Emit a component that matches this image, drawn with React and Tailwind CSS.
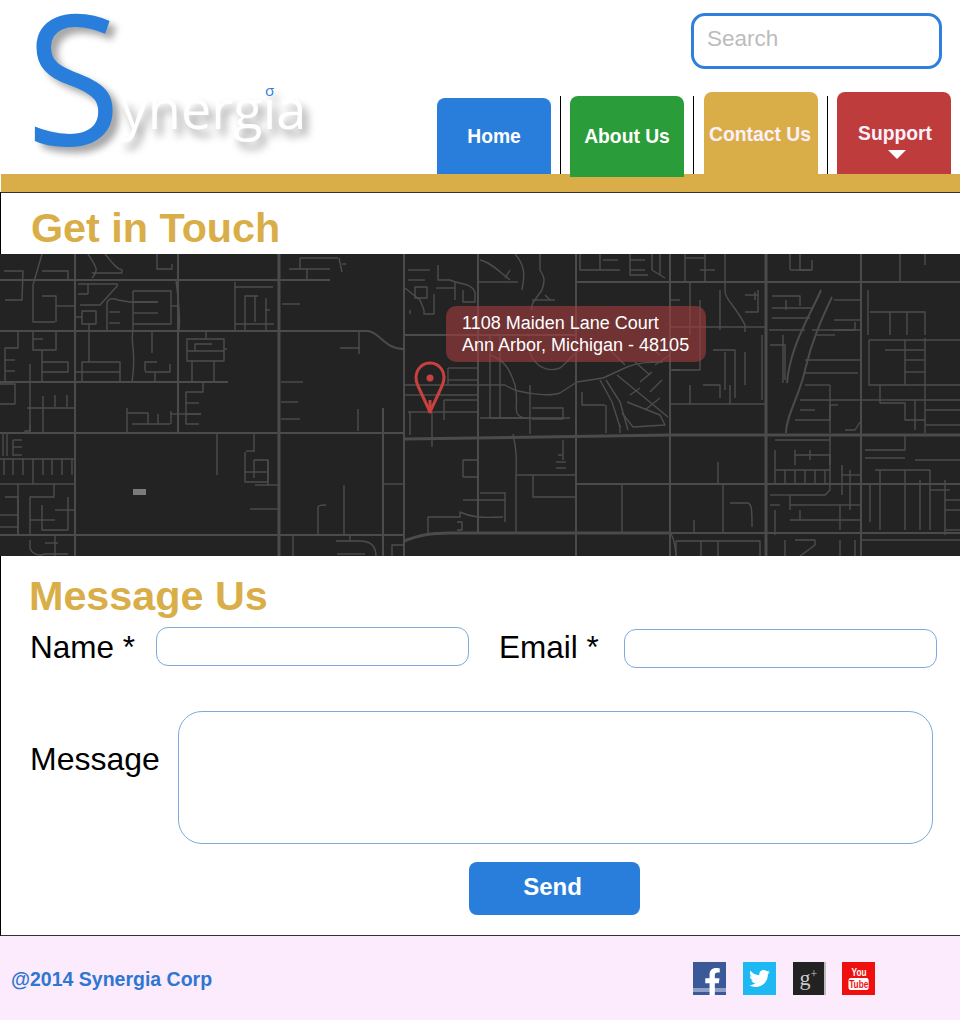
import { FaFacebookF, FaTwitter } from "react-icons/fa";

const FONT = "font-['Liberation_Sans',Arial,sans-serif]";

// map drawn in page coordinates, viewBox starts at the top of the map
const MAJOR_ROADS = [
  "M404 439L670 435H960",
  "M404 541C420 535 430 533 450 533H670",
  "M766 254V556",
  "M279 254V556",
];

const MID_ROADS = [
  "M0 280H330", "M0 331H368C378 331 385 349 403 349", "M0 382H228", "M0 433H405", "M0 535H405",
  "M75 254V556", "M178 254V433", "M404 254V556", "M383 408V556",
  "M575 282H960", "M404 335H575", "M575 484H960", "M670 533H960",
  "M576 254V556", "M670 254V556", "M861 254V556", "M478 254V534",
  "M821 290C812 312 790 345 787 383",
  "M832 297C822 318 812 340 805 370C800 395 786 415 786 433",
];

const STREETS = [
  // top left
  "M4 271H23L22 300H5", "M42 254L33 285V322H55", "M42 271H68V280", "M42 296H56V322", "M56 306H75",
  "M5 382V348H18V331", "M5 360H15", "M5 371H15", "M33 331V350H56V331", "M33 339H43", "M42 350V382",
  "M42 362H68V372H42", "M88 254C95 265 100 270 92 278", "M105 254C112 262 115 268 122 270V273H92",
  "M157 254V269H172V264", "M300 258H338", "M300 258V269", "M289 269H330", "M307 269V280", "M339 258L342 272", "M342 264H346",
  "M78 284H118", "M78 294H88M88 284V294", "M80 305H100L118 285", "M107 330V303C108 298 113 298 118 300L130 302H158",
  "M109 312H120", "M109 323H120", "M82 311H96V324H82Z", "M89 324V362", "M76 317H82",
  "M133 291H171V324H133", "M133 291V331", "M133 302H158", "M133 313H158", "M171 306H178", "M176 280C178 300 181 315 179 331",
  "M133 331C130 345 137 350 132 382", "M152 331V353", "M82 382V362H120V382", "M75 372H120", "M145 371V362H157", "M145 372H170V364", "M155 372V382",
  "M235 282V287H273", "M235 330V287", "M245 330V296H258", "M255 296V322", "M266 298V330", "M235 324H274", "M270 310H265",
  "M187 339H224V361H187Z", "M187 351H224", "M195 351V344H212", "M206 331V339", "M192 361V382", "M214 361V382", "M224 349H227",
  "M203 382V392H186V424H199", "M186 403H199", "M186 414H201", "M170 414H201", "M127 408V433", "M127 413H148V424", "M132 424H170", "M158 424V414", "M171 411V424",
  "M281 382H303", "M281 402H298", "M281 419H300", "M282 304H300", "M340 348H360M359 332V354", "M358 409V431",
  "M0 384H15V404H0", "M30 364V433", "M43 396V433", "M27 408H75", "M30 425V431H25V433", "M55 395V407", "M67 395V407",
  // lower left
  "M3 434V456", "M7 434V456", "M13 440V456", "M13 440H22", "M13 447H22", "M13 455H22",
  "M0 459H75", "M4 459V475", "M13 459V475", "M23 459V475", "M33 459V484", "M43 459V475", "M52 459V475", "M62 459V475", "M72 459V475",
  "M0 484H75", "M18 484V535", "M5 497H18V535", "M0 515H18", "M0 527H18", "M30 535V497H54V484", "M30 520H55", "M42 505V530H68V497", "M55 510H75",
  "M217 433V475", "M254 433V452", "M246 451H254", "M245 452V482H268V460H254", "M254 460V478", "M245 472H268", "M268 460V485", "M255 485H279", "M250 509H279",
  "M318 535V507C318 505 322 505 326 505", "M344 485V535", "M383 484H404", "M293 535V556", "M336 541H360C373 541 376 548 376 556", "M350 535V541", "M337 554H365", "M392 556V545H404",
  "M30 540V548C32 555 40 556 45 554H68", "M45 543H58", "M55 535V556",
  // top middle
  "M408 270H430", "M408 280H425", "M415 287H427V298H415Z", "M405 288L420 300L424 310V314H434V294", "M410 310V314",
  "M438 265V280H450C460 285 470 282 475 292V302H463V290", "M436 288H455", "M455 282V300",
  "M480 260C490 262 500 272 510 280", "M510 270L505 278", "M478 282H518", "M540 254V270C545 278 545 280 542 290C535 300 530 305 532 310",
  "M515 254C525 265 525 275 522 290", "M532 300H555", "M550 300L545 295",
  "M580 254V270H620", "M600 254V270", "M603 260H618", "M630 254V275H648", "M630 260H645", "M630 270H645",
  "M652 254V270L665 278", "M660 254V275", "M685 254V282", "M705 254V282", "M685 258H705", "M700 270H715",
  "M690 282V335", "M670 300H680", "M700 300V335", "M725 254V290C725 300 735 305 745 325V332", "M745 295H758", "M755 292V300", "M758 290V312H745", "M720 330V290",
  "M670 327H766", "M670 370H680", "M700 335V370H672", "M713 350H735V398", "M725 352V390", "M745 352V385", "M762 335V400", "M703 385H720V398",
  "M670 404H766", "M690 385V404", "M730 385V404",
  // the curved neighbourhood
  "M404 385H505C510 388 513 390 518 391C535 395 552 396 560 393L577 382L603 378L627 367C640 362 650 362 663 362",
  "M600 380L612 402L620 427", "M606 380L620 402L628 430", "M627 402L660 415L665 425L633 427L622 413",
  "M617 375L668 417", "M635 362L650 375", "M655 365L670 355", "M630 395L640 388", "M645 410L660 398", "M640 382L652 372", "M650 392L662 380",
  "M582 392V405H605", "M606 405V433", "M620 425V433",
  "M490 355C505 360 510 370 515 385C520 405 510 415 525 418", "M490 335V418H570", "M500 335V418", "M530 385V434", "M532 408H563V419H532", "M480 418H530",
  "M404 395H478", "M444 400V420", "M444 400H478", "M408 412H478", "M410 412V435", "M432 412V447", "M448 368H478", "M448 380H478", "M448 368V385",
  "M530 340C525 355 540 375 560 368C570 360 575 350 590 345", "M610 350L625 365", "M640 340L660 355",
  // right blocks
  "M772 296H800V306", "M772 308H812", "M772 318H810", "M786 300V310", "M769 330H805", "M812 330H860", "M770 345H785V380", "M783 335V383",
  "M834 300H860", "M834 320H860", "M833 330H855V322", "M815 335H835", "M805 360H860", "M805 373H858", "M800 400H860", "M805 385H830",
  "M830 385V433", "M795 420H830", "M800 410H815", "M830 405V420", "M830 405H838", "M845 430H855L860 422",
  "M790 254V270", "M800 254V270H812V260", "M790 270H810", "M900 254V282", "M925 254V265",
  "M868 290V335", "M890 312V335", "M907 312V335", "M870 312H925V335", "M869 340H960", "M869 340V385H960", "M885 350H925", "M905 360H925", "M905 372H925", "M905 340V385",
  "M925 338V433", "M880 385V403H905V420H925", "M925 410H960", "M925 425H960", "M861 400H960", "M915 400V430",
  // lower middle and right
  "M513 434C515 445 517 450 516 475V533", "M516 475H575", "M533 475V497H577", "M563 440V460", "M558 455H563", "M556 462H566", "M556 468H566",
  "M463 460H478V477H463", "M463 460V477", "M480 493H505", "M505 492V522", "M428 533V517H460V512C470 517 480 518 503 517", "M463 500H505", "M457 522H462V530H457",
  "M622 484V533", "M723 484V533", "M730 503H748C752 505 752 510 752 527", "M718 462V484", "M694 520V533",
  "M676 541H760V556", "M676 541V556", "M701 541V556", "M718 541V556", "M670 533C672 535 675 540 676 556",
  "M775 440H830", "M795 455H830V465", "M775 450V484", "M795 450V465", "M810 450V460", "M775 470H830", "M775 484H830",
  "M785 470V484", "M795 470V484", "M805 470V484", "M815 470V484", "M825 470V484", "M830 434V490L825 495H790", "M790 495V510", "M770 495H790", "M770 505H780", "M790 505H830",
  "M842 465V495", "M842 475H860", "M850 470V510", "M830 505H860", "M840 505V530", "M790 520H860", "M775 510V535", "M800 510V520",
  "M785 540V556", "M795 540H815V545L800 556", "M840 540V556", "M855 540V556",
  "M865 450H905V434", "M865 458H905", "M915 460H960", "M870 484V522", "M880 470V530", "M905 470V530", "M875 470H930", "M920 480V530", "M930 470V530", "M930 490H950", "M945 480V535",
  "M945 500H960", "M945 510H960", "M945 530H960", "M860 540H960",
];

function MapRoads() {
  return (
    <svg viewBox="0 254 960 302" className="block w-full h-full" fill="none" strokeLinejoin="round">
      <g stroke="#4d4d4d" strokeWidth="1.4">
        {STREETS.map((d) => <path key={d} d={d} />)}
      </g>
      <g stroke="#4b4b4b" strokeWidth="2">
        {MID_ROADS.map((d) => <path key={d} d={d} />)}
      </g>
      <g stroke="#4b4b4b" strokeWidth="3">
        {MAJOR_ROADS.map((d) => <path key={d} d={d} />)}
      </g>
      <rect x="133" y="489" width="13" height="6" fill="#7b7b7b" />
      {/* pin */}
      <path d="M430 412L418 386C412 372 421 363 430 363C439 363 448 372 442 386Z" stroke="#c8403f" strokeWidth="3" />
      <path d="M430 413V400" stroke="#c8403f" strokeWidth="3" />
      <circle cx="430" cy="378" r="3.5" fill="#c8403f" />
    </svg>
  );
}

function Logo() {
  return (
    <div className="relative w-[340px] h-[174px] font-['Open_Sans',sans-serif]">
      <div className="flex items-start pl-[26px]">
        <span className="text-[182px] leading-[148px] font-medium origin-left scale-x-95 text-[#2a7edb] [text-shadow:7px_6px_8px_rgba(0,0,0,0.35)]">S</span>
        <span className="text-[54px] leading-[60px] mt-[78px] -ml-[5px] text-white [text-shadow:5px_7px_8px_rgba(0,0,0,0.4)]">ynergia</span>
      </div>
      <span className="absolute left-[265px] top-[80px] text-[15px] leading-[20px] text-[#2a7edb]">σ</span>
    </div>
  );
}

function Tab({ children, className }) {
  return (
    <a className={`w-[114px] rounded-t-[8px] flex flex-col items-center justify-center font-bold leading-[22px] ${className}`}>
      {children}
    </a>
  );
}

function Sep({ className = "" }) {
  return <div className={`w-px h-[78px] bg-black ${className}`} />;
}

function Header() {
  return (
    <div className="flex justify-between h-[174px] pr-[9px]">
      <Logo />
      <div className="flex flex-col items-end">
        <input
          placeholder="Search"
          className="mt-[13px] mr-[9px] w-[251px] h-[56px] px-[13px] pb-[4px] bg-white border-[3px] border-[#2f80dc] rounded-[14px] text-[22.5px] placeholder:text-[#bcbcbc] outline-none"
        />
        <nav className="flex items-end h-[82px] mt-[23px] text-[19.3px]">
          <Tab className="h-[76px] pt-[2px] bg-[#2a7edb] text-white">Home</Tab>
          <Sep className="mx-[9px]" />
          <Tab className="h-[81px] -mb-[3px] relative z-10 bg-[#2a9c3a] text-white">About Us</Tab>
          <Sep className="ml-[9px] mr-[10px]" />
          <Tab className="h-[82px] pt-[3px] pr-[2px] bg-[#d9ae48] text-[#fdf0fb]">Contact Us</Tab>
          <Sep className="mx-[9px]" />
          <Tab className="h-[82px] pt-[16px] pl-[2px] bg-[#bf3c3d] text-[#fdf0fb]">
            Support
            <span className="mt-[5px] w-0 h-0 translate-x-[2px] border-x-[9px] border-x-transparent border-t-[9px] border-t-white" />
          </Tab>
        </nav>
      </div>
    </div>
  );
}

function Social() {
  return (
    <div className="flex items-center">
      <a className="relative w-[33px] h-[33px] bg-[#3b5998] flex items-end justify-center overflow-hidden">
        <span className="absolute left-0 right-0 bottom-[3px] h-[4px] bg-[#8ea0c8]" />
        <FaFacebookF className="relative text-white text-[27px] translate-x-[3px]" />
      </a>
      <a className="ml-[17px] w-[33px] h-[33px] bg-[#1eb8f2] flex items-center justify-center">
        <FaTwitter className="text-white text-[21px]" />
      </a>
      <a className="ml-[17px] w-[33px] h-[33px] bg-[#222222] border-r-2 border-[#bbbbbb] flex items-center justify-center font-['Liberation_Serif',serif] text-[#c9c9c9] text-[22px] leading-none">
        g<span className="text-[12px] -mt-[8px]">+</span>
      </a>
      <a className="ml-[16px] w-[33px] h-[33px] bg-[#f00f0f] flex flex-col items-center justify-center text-white font-bold">
        <span className="text-[11px] leading-[11px] scale-x-75">You</span>
        <span className="bg-white text-[#f00f0f] rounded-[3px] px-[1px] text-[11px] leading-[12px] scale-x-75">Tube</span>
      </a>
    </div>
  );
}

export default function App() {
  return (
    <div className={`w-[960px] h-[1020px] bg-white ${FONT}`}>
      <Header />
      <div className="ml-px h-[18px] bg-[#d9ae48]" />
      <div className="h-[744px] border-l border-b border-t border-l-black border-b-[#333333] border-t-[#333333]">
        <h1 className="h-[61px] pl-[30px] pt-[10px] text-[41.3px] leading-[50px] font-bold text-[#d9ae48]">Get in Touch</h1>
        <div className="relative -ml-px h-[302px] bg-[#232323]">
          <MapRoads />
          <div className="absolute left-[446px] top-[52px] w-[260px] h-[56px] pl-[16px] pt-[6px] rounded-[10px] bg-[#a33c3c]/60 text-white text-[18px] leading-[22px]">
            <p>1108 Maiden Lane Court</p>
            <p>Ann Arbor, Michigan - 48105</p>
          </div>
        </div>
        <h2 className="pl-[28px] pt-[15px] text-[41.3px] leading-[50px] font-bold text-[#d9ae48]">Message Us</h2>
        <div className="flex items-start pl-[29px] mt-[6px]">
          <label className="w-[126px] text-[31.5px] leading-[40px]">Name *</label>
          <input className="w-[313px] h-[39px] border border-[#7ea9dd] rounded-[12px]" />
          <label className="ml-[30px] w-[125px] text-[31.5px] leading-[40px]">Email *</label>
          <input className="mt-[2px] w-[313px] h-[39px] border border-[#7ea9dd] rounded-[12px]" />
        </div>
        <div className="flex items-start pl-[29px] mt-[43px]">
          <label className="w-[148px] mt-[28px] text-[32px] leading-[40px]">Message</label>
          <textarea className="w-[755px] h-[133px] border border-[#7ea9dd] rounded-[24px] resize-none" />
        </div>
        <button className="block ml-[468px] mt-[18px] w-[171px] h-[53px] pb-[3px] pr-[4px] rounded-[8px] bg-[#2a7edb] text-white text-[24px] font-bold">Send</button>
      </div>
      <footer className="h-[84px] bg-[#fbebfd] flex items-center justify-between pl-[11px] pr-[85px]">
        <p className="mt-[4px] text-[19.5px] font-bold text-[#2f76d2]">@2014 Synergia Corp</p>
        <Social />
      </footer>
    </div>
  );
}
